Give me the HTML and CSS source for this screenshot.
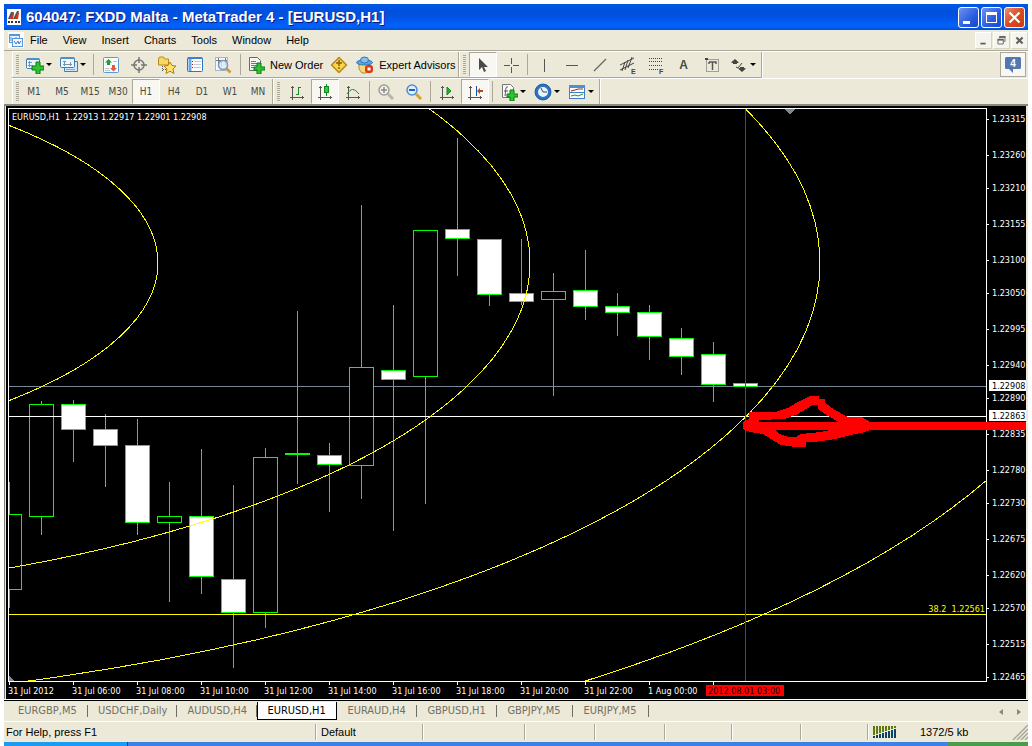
FILE: index.html
```html
<!DOCTYPE html>
<html lang="en">
<head>
<meta charset="utf-8">
<title>604047: FXDD Malta - MetaTrader 4 - [EURUSD,H1]</title>
<link rel="stylesheet" href="styles.css">
</head>
<body>
<div class="window">
  <header class="titlebar">
    <svg class="app-icon" viewBox="0 0 14 16"><rect width="14" height="16" fill="#fff"/><path d="M1 10L4 3l3 0-2 7zM6 10l4-8 2 0-3 8z" fill="#555"/><path d="M3 10l3-6 1 1-1 5zM8 10l3-7 1 1-1 6z" fill="#e03010"/><path d="M1 13h2M4 13h2M8 13h2M11 13h2" stroke="#333" stroke-width="2"/></svg>
    <h1 class="title">604047: FXDD Malta - MetaTrader 4 - [EURUSD,H1]</h1>
    <div class="win-buttons">
      <button class="win-btn" aria-label="Minimize"><svg viewBox="0 0 19 19"><path d="M4 13h7v3H4z" fill="#fff"/></svg></button>
      <button class="win-btn" aria-label="Maximize"><svg viewBox="0 0 19 19"><path d="M4 4h11v11H4zM5 7h9v7H5z" fill="#fff" fill-rule="evenodd"/></svg></button>
      <button class="win-btn close" aria-label="Close"><svg viewBox="0 0 19 19"><path d="M4.500 4.500l10 10M14.500 4.500l-10 10" stroke="#fff" stroke-width="2.200"/></svg></button>
    </div>
  </header>

  <nav class="menubar">
    <svg class="menu-icon" viewBox="0 0 16 16"><rect width="16" height="16" fill="#fff"/><rect x="1.500" y="2.500" width="10" height="8" fill="#e4f0fc" stroke="#5a96dc"/><path d="M1 3h11" stroke="#5a96dc" stroke-width="2"/><path d="M3 5v4M5 6v4M8 5v4" stroke="#5a96dc"/><rect x="4.500" y="6.500" width="10" height="8" fill="#f2f8ff" stroke="#5a96dc"/><path d="M6 9l2 3 2-3 1 3 2-3" fill="none" stroke="#3c78c8"/></svg>
    <button>File</button><button>View</button><button>Insert</button><button>Charts</button><button>Tools</button><button>Window</button><button>Help</button>
    <div class="mdi">
      <button aria-label="Minimize chart"><svg viewBox="0 0 17 17"><path d="M5 11h6v2H5z" fill="#63625a"/></svg></button>
      <button aria-label="Restore chart"><svg viewBox="0 0 17 17"><path d="M6.500 6V4.500h6v5H11M4.500 7.500h6v5h-6z" fill="none" stroke="#63625a"/><path d="M6 4.500h7M4 7.500h7" stroke="#63625a" stroke-width="2"/></svg></button>
      <button aria-label="Close chart"><svg viewBox="0 0 17 17"><path d="M5 5l7 7M12 5l-7 7" stroke="#63625a" stroke-width="2.400"/></svg></button>
    </div>
  </nav>

  <div class="toolbars">
    <div class="row">
      <div class="toolbar standard">
        <i class="grip"></i>
        <button class="tool drop" aria-label="New chart"><svg viewBox="0 0 18 18"><rect x=".500" y="2.500" width="13" height="10" rx="1" fill="#eef6fe" stroke="#3f7fb5"/><path d="M1 3h12" stroke="#4c90d0" stroke-width="2"/><path d="M3.500 5v6M2 9.500h5M2 6.500h4" stroke="#7592ad"/><path d="M10 6h4v4h4v4h-4v4h-4v-4H6v-4h4z" fill="#2fc42f" stroke="#087a18"/></svg><b class="arrow"></b></button>
        <button class="tool drop" aria-label="Profiles"><svg viewBox="0 0 18 18"><path d="M4.500 5.500h13v10h-13z" fill="#d3e7fb" stroke="#3f7fb5"/><rect x=".500" y="1.500" width="14" height="10" rx="1" fill="#eef6fe" stroke="#3f7fb5"/><path d="M1 2h13" stroke="#4c90d0" stroke-width="2"/><path d="M3 5.500h3M3 8.500h9M10.500 6v4M4.500 5v5" stroke="#7592ad"/><path d="M6 13.500h9" stroke="#9ab"/></svg><b class="arrow"></b></button>
        <i class="sep"></i>
        <button class="tool" aria-label="Market Watch"><svg viewBox="0 0 18 18"><rect x="1.500" y="1.500" width="15" height="15" rx="1" fill="#f8fcff" stroke="#5b9bd5"/><path d="M11 5.500h4M3 12.500h4M3 14.500h5" stroke="#b8c4d0"/><path d="M6.500 3l3.500 3.500H8V9H5V6.500H3z" fill="#18a030"/><path d="M11.500 15.500L8 12h2V9h3v3h2z" fill="#e05a40"/></svg></button>
        <button class="tool" aria-label="Data Window"><svg viewBox="0 0 18 18"><circle cx="9" cy="9" r="5" fill="none" stroke="#777" stroke-width="1.500"/><path d="M9 1v6M9 11v6M1 9h6M11 9h6" stroke="#777" stroke-width="1.500"/></svg></button>
        <button class="tool" aria-label="Navigator"><svg viewBox="0 0 18 18"><path d="M.500 3l1-2h4l1 2h4v6H.500z" fill="#f7d867" stroke="#b58a18"/><path d="M4.500 10v6M5 13.500h3" stroke="#555" stroke-dasharray="1 1"/><path d="M12 6l2 3.500 4 .5-3 3 1 4.500-4-2.300-4 2.300 1-4.500-3-3 4-.5z" fill="#ffe46a" stroke="#b57a20"/></svg></button>
        <button class="tool" aria-label="Terminal"><svg viewBox="0 0 18 18"><rect x="1.500" y="1.500" width="15" height="14" rx="1" fill="#fff" stroke="#2f73c2"/><path d="M2 2h14" stroke="#3b82d8" stroke-width="2"/><path d="M4 3v12" stroke="#6ba6e6" stroke-width="3"/><path d="M6 5.500h1M6 8.500h1M6 11.500h1" stroke="#b01010"/><path d="M8 5.500h7M8 8.500h7M8 11.500h7" stroke="#bccadb"/></svg></button>
        <button class="tool" aria-label="Strategy Tester"><svg viewBox="0 0 18 18"><rect x="1.500" y="1.500" width="12" height="13" fill="#f4f8fc" stroke="#a8b8c8"/><path d="M4.500 2v7M2 4.500h11M11.500 2v7M7.500 4v7" stroke="#778"/><circle cx="9" cy="9" r="4.500" fill="#d9ebfa" fill-opacity=".8" stroke="#7b98b8" stroke-width="1.500"/><path d="M12.500 12.500l4 4" stroke="#d09a30" stroke-width="2.500"/></svg></button>
        <i class="sep"></i>
        <button class="tool label"><svg viewBox="0 0 18 18"><path d="M2.500 1.500h8l3 3v10h-11z" fill="#f6f6f6" stroke="#686868"/><path d="M4 5.500h5M4 7.500h7M4 9.500h6M4 11.500h4" stroke="#777"/><path d="M10 7h4v4h4v3h-4v4h-4v-4H7v-3h3z" fill="#2fc42f" stroke="#087a18"/></svg><span>New Order</span></button>
        <button class="tool" aria-label="MetaEditor"><svg viewBox="0 0 18 18"><path d="M9 1.500L16.500 9 9 16.500 1.500 9z" fill="#f8d44a" stroke="#b58812" stroke-width="1.500" stroke-linejoin="round"/><path d="M9 4v6M6 7h6M9 11v2" stroke="#8a5c10" stroke-width="1.500"/></svg></button>
        <button class="tool label"><svg viewBox="0 0 18 18"><path d="M3 8h11v4l-4 5H6l-3-4z" fill="#f6d878" stroke="#b08a30"/><ellipse cx="8.500" cy="6.500" rx="8" ry="2.500" fill="#5ea3df" stroke="#3478b4"/><ellipse cx="8.500" cy="4" rx="4" ry="3" fill="#85bff0" stroke="#3478b4"/><rect x="9" y="9" width="8" height="8" rx="3" fill="#dc3818"/><rect x="11.500" y="11.500" width="3" height="3" fill="#fff"/></svg><span>Expert Advisors</span></button>
      </div>
      <div class="toolbar">
        <i class="grip"></i>
        <button class="tool pressed" aria-label="Cursor"><svg viewBox="0 0 18 18"><path d="M5 2v12l3-3 2 5 2-1-2-4h4z" fill="#4a4a4a"/></svg></button>
        <button class="tool" aria-label="Crosshair"><svg viewBox="0 0 18 18"><path d="M9.500 2v6M9.500 11v6M2 9.500h6M11 9.500h6" stroke="#555"/></svg></button>
        <i class="sep slim"></i>
        <button class="tool" aria-label="Vertical line"><svg viewBox="0 0 18 18"><path d="M9.500 3v13" stroke="#555"/></svg></button>
        <button class="tool" aria-label="Horizontal line"><svg viewBox="0 0 18 18"><path d="M3 9.500h12" stroke="#555"/></svg></button>
        <button class="tool" aria-label="Trendline"><svg viewBox="0 0 18 18"><path d="M3 15L15 3" stroke="#666" stroke-width="1.300"/></svg></button>
        <button class="tool" aria-label="Equidistant channel"><svg viewBox="0 0 18 18"><path d="M1 9l14-7M1 14l14-7M3 15l3-9M6 14l3-10M9 12l4-11" stroke="#444"/><text x="12" y="18" class="tiny">E</text></svg></button>
        <button class="tool" aria-label="Fibonacci retracement"><svg viewBox="0 0 18 18"><path d="M2 2.500h14M2 5.500h14M2 9.500h14M2 13.500h9" stroke="#444" stroke-dasharray="1 1"/><text x="12" y="18" class="tiny">F</text></svg></button>
        <button class="tool glyph" aria-label="Text">A</button>
        <button class="tool" aria-label="Text label"><svg viewBox="0 0 18 18"><path d="M3.500 3.500h12v12h-12z" fill="none" stroke="#555" stroke-dasharray="1 1"/><path d="M2 2h3v2H2z" fill="#444"/><path d="M6 6h7v2M6 8V6M9.500 6v8" stroke="#555" stroke-width="1.500" fill="none"/></svg></button>
        <button class="tool drop" aria-label="Arrows"><svg viewBox="0 0 18 18"><path d="M5 3l4 3.500-2 .5v1H3V7l-2-.500zM12 16l-4-3.500 2-.5v-1h4v1l2 .500z" fill="#444"/><path d="M6 11l2 1 4-5" stroke="#444" fill="none"/></svg><b class="arrow"></b></button>
      </div>
      <button class="messages" aria-label="4 messages"><svg viewBox="0 0 18 18"><path d="M2 1h14l1 1v10l-1 1h-7v4l-4-4H2l-1-1V2z" fill="#5577b0"/><text x="9" y="11">4</text></svg></button>
    </div>
    <div class="row lower">
      <div class="toolbar periods">
        <i class="grip"></i>
        <button class="tool">M1</button><button class="tool">M5</button><button class="tool">M15</button><button class="tool">M30</button><button class="tool pressed">H1</button><button class="tool">H4</button><button class="tool">D1</button><button class="tool">W1</button><button class="tool">MN</button>
      </div>
      <div class="toolbar">
        <i class="grip"></i>
        <button class="tool" aria-label="Bar chart"><svg viewBox="0 0 18 18"><path d="M4.500 3v14M2 14.500h14M3 4.500h3M14.500 13v3" stroke="#555"/><path d="M10.500 4v8M8 11.500h3M10 4.500h3" stroke="#1c8a30"/></svg></button>
        <button class="tool pressed" aria-label="Candlesticks"><svg viewBox="0 0 18 18"><path d="M4.500 3v14M2 14.500h14M3 4.500h3M14.500 13v3" stroke="#555"/><path d="M10.500 1v12" stroke="#118a20"/><rect x="8.500" y="3.500" width="4" height="6" fill="#28d040" stroke="#118a20"/></svg></button>
        <button class="tool" aria-label="Line chart"><svg viewBox="0 0 18 18"><path d="M4.500 3v14M2 14.500h14M3 4.500h3M14.500 13v3" stroke="#555"/><path d="M3 11c4-6 7-6 12 0" fill="none" stroke="#1c8a30"/></svg></button>
        <i class="sep slim"></i>
        <button class="tool" aria-label="Zoom in"><svg viewBox="0 0 18 18"><path d="M11 11l5 5" stroke="#b8b6a8" stroke-width="3"/><circle cx="7" cy="7" r="5" fill="#f4f3ee" stroke="#9f9f98" stroke-width="1.500"/><path d="M4 7h6M7 4v6" stroke="#888" stroke-width="1.500"/></svg></button>
        <button class="tool" aria-label="Zoom out"><svg viewBox="0 0 18 18"><path d="M11 11l5 5" stroke="#d6a52c" stroke-width="3"/><circle cx="7" cy="7" r="5" fill="#e2f0fd" stroke="#4c8fd8" stroke-width="1.500"/><path d="M4 7h6" stroke="#2660b0" stroke-width="2"/></svg></button>
        <i class="sep slim"></i>
        <button class="tool" aria-label="Auto scroll"><svg viewBox="0 0 18 18"><path d="M4.500 3v14M2 14.500h14M3 4.500h3M14.500 13v3" stroke="#555"/><path d="M9 4l4 4-4 4z" fill="#1fae35" stroke="#118a20"/></svg></button>
        <button class="tool pressed" aria-label="Chart shift"><svg viewBox="0 0 18 18"><path d="M4.500 3v14M2 14.500h14M3 4.500h3M14.500 13v3" stroke="#555"/><path d="M10.500 3v10" stroke="#1850a0"/><path d="M11 8l3-3v2h3v2h-3v2z" fill="#b84820"/></svg></button>
        <i class="sep"></i>
        <button class="tool drop" aria-label="Indicators"><svg viewBox="0 0 18 18"><path d="M2.500 1.500h8l3 3v10h-11z" fill="#fafafa" stroke="#777"/><path d="M8 4c-3-1-2 4-3 9M4 8h4" stroke="#555" fill="none"/><path d="M10 7h4v4h4v3h-4v4h-4v-4H7v-3h3z" fill="#2fc42f" stroke="#087a18"/></svg><b class="arrow"></b></button>
        <button class="tool drop" aria-label="Periods"><svg viewBox="0 0 18 18"><circle cx="9" cy="9" r="6.500" fill="#e8f4ff" stroke="#2a72c8" stroke-width="3"/><circle cx="9" cy="9" r="8" fill="none" stroke="#154c90" stroke-width=".8"/><path d="M7 5l2 4h4" fill="none" stroke="#444"/></svg><b class="arrow"></b></button>
        <button class="tool drop" aria-label="Templates"><svg viewBox="0 0 18 18"><rect x="1.500" y="2.500" width="15" height="13" fill="#fff" stroke="#3d7fc4"/><path d="M1 3.500h16" stroke="#4c90d8" stroke-width="3"/><path d="M2 9.500h14" stroke="#3d7fc4"/><path d="M3 8l4-1 3-1 5 0" stroke="#a02818" fill="none"/><path d="M3 13l4-1 3 1 5-2" stroke="#208a30" fill="none"/></svg><b class="arrow"></b></button>
      </div>
    </div>
  </div>

  <main class="chart-frame">
    <svg class="chart" viewBox="6 106 1020 593" role="img" aria-label="EURUSD H1 candlestick chart">
      <defs><clipPath id="plot"><rect x="9" y="109" width="977" height="572"/></clipPath></defs>
      <rect x="6" y="106" width="1020" height="593" fill="#000"/>
      <g class="crisp" clip-path="url(#plot)">
        <path d="M9 386.500H986" stroke="#778899"/>
        <path class="wick" d="M9.500 482V608M41.500 401V535M73.500 400V462M105.500 414V487M137.500 419V535M169.500 482V602M201.500 449V594M233.500 485V668M265.500 448V628M297.500 311V484M329.500 443V512M361.500 205V499M393.500 305V531M425.500 376V504M457.500 138V276M489.500 239V306M521.500 239V305M553.500 273V396M585.500 250V320M617.500 293V336M649.500 305V360M681.500 328V375M713.500 342V402"/>
        <g class="bull">
          <rect x="-2.500" y="514.500" width="24" height="75"/><rect x="29.500" y="404.500" width="24" height="112"/><rect x="157.500" y="516.500" width="24" height="6"/><rect x="253.500" y="457.500" width="24" height="155"/><rect x="349.500" y="367.500" width="24" height="98"/><rect x="413.500" y="230.500" width="24" height="146"/><rect x="541.500" y="291.500" width="24" height="8"/>
        </g>
        <path d="M9.500 482v32M9.500 590v18" class="wick"/><rect x="285" y="453" width="25" height="2" fill="#0f0"/>
        <g class="bear">
          <rect x="61.500" y="404.500" width="24" height="25"/><rect x="93.500" y="429.500" width="24" height="16"/><rect x="125.500" y="445.500" width="24" height="77"/><rect x="189.500" y="516.500" width="24" height="60"/><rect x="221.500" y="579.500" width="24" height="33"/><rect x="317.500" y="455.500" width="24" height="9"/><rect x="381.500" y="370.500" width="24" height="9"/><rect x="445.500" y="229.500" width="24" height="9"/><rect x="477.500" y="239.500" width="24" height="55"/><rect x="509.500" y="293.500" width="24" height="8"/><rect x="573.500" y="290.500" width="24" height="16"/><rect x="605.500" y="306.500" width="24" height="6"/><rect x="637.500" y="312.500" width="24" height="24"/><rect x="669.500" y="338.500" width="24" height="18"/><rect x="701.500" y="354.500" width="24" height="30"/><rect x="733.500" y="383.500" width="24" height="3"/>
        </g>
        <path d="M9 416.500H986" stroke="#fff"/>
        <g class="arc">
          <path d="M9 614.500H986"/>
          <ellipse cx="-385" cy="263" rx="543" ry="200"/><ellipse cx="-385" cy="263" rx="915" ry="338"/><ellipse cx="-385" cy="263" rx="1205" ry="445"/><ellipse cx="-385" cy="263" rx="1493" ry="550"/>
        </g>
        <path d="M745.500 109V681" stroke="#f00"/>
        <path d="M784 109h11l-5 5h-1zM9 676l5 5H9z" fill="#778899"/>
      </g>
      <path class="crisp axis" d="M8 108.500H986.500V681.500H8.500V108"/>
      <path class="crisp axis" d="M9.500 682v3M73.500 682v3M137.500 682v3M201.500 682v3M265.500 682v3M329.500 682v3M393.500 682v3M457.500 682v3M521.500 682v3M585.500 682v3M649.500 682v3M713.500 682v3M987 119.500h2M987 155.500h2M987 188.500h2M987 224.500h2M987 260.500h2M987 293.500h2M987 329.500h2M987 365.500h2M987 398.500h2M987 434.500h2M987 470.500h2M987 503.500h2M987 539.500h2M987 575.500h2M987 608.500h2M987 644.500h2M987 677.500h2"/>
      <text x="12" y="120">EURUSD,H1&#160; 1.22913 1.22917 1.22901 1.22908</text>
      <g>
        <text x="992" y="122">1.23315</text><text x="992" y="158">1.23260</text><text x="992" y="191">1.23210</text><text x="992" y="227">1.23155</text><text x="992" y="263">1.23100</text><text x="992" y="296">1.23050</text><text x="992" y="332">1.22995</text><text x="992" y="368">1.22940</text><text x="992" y="401">1.22890</text><text x="992" y="437">1.22835</text><text x="992" y="473">1.22780</text><text x="992" y="506">1.22730</text><text x="992" y="542">1.22675</text><text x="992" y="578">1.22620</text><text x="992" y="611">1.22570</text><text x="992" y="647">1.22515</text><text x="992" y="680">1.22465</text>
      </g>
      <path d="M989 380h37v11h-37zM989 410h37v11h-37z" fill="#fff"/>
      <text class="dark" x="992" y="389">1.22908</text><text class="dark" x="992" y="419">1.22863</text>
      <text class="fib" x="985" y="612">38.2&#160; 1.22561</text>
      <g>
        <text x="8" y="694">31 Jul 2012</text><text x="72" y="694">31 Jul 06:00</text><text x="136" y="694">31 Jul 08:00</text><text x="200" y="694">31 Jul 10:00</text><text x="264" y="694">31 Jul 12:00</text><text x="328" y="694">31 Jul 14:00</text><text x="392" y="694">31 Jul 16:00</text><text x="456" y="694">31 Jul 18:00</text><text x="520" y="694">31 Jul 20:00</text><text x="584" y="694">31 Jul 22:00</text><text x="648" y="694">1 Aug 00:00</text>
      </g>
      <rect x="706" y="685" width="78" height="11" fill="#f00"/><text class="dark" x="708" y="694">2012.08.01 03:00</text>
      <path class="marker crisp" d="M743 422L749 419V412H775L788 408L798 402L806 398L810 396H819V399H825V403L835 410L848 417H862L870 422H1026V430H870L865 432L851 435L835 439L815 442H806V447H795L781 445L771 439L763 434L750 432L743 429ZM759 420V422H839L828 416L818 409V405H813L798 414L785 419ZM775 430L780 434L788 437H796L801 434L821 432L830 430Z"/>
    </svg>
  </main>

  <nav class="tabs">
    <button>EURGBP,M5</button><button>USDCHF,Daily</button><button>AUDUSD,H4</button><button class="active">EURUSD,H1</button><button>EURAUD,H4</button><button>GBPUSD,H1</button><button class="short">GBPJPY,M5</button><button class="short">EURJPY,M5</button>
    <div class="scroll"><button aria-label="Scroll left"><svg viewBox="0 0 6 8"><path d="M5 1v6L1 4z"/></svg></button><button aria-label="Scroll right"><svg viewBox="0 0 6 8"><path d="M1 1v6l4-3z"/></svg></button></div>
  </nav>

  <footer class="status">
    <span>For Help, press F1</span><span>Default</span><span></span><span></span><span></span><span></span><span></span><span></span>
    <span class="traffic">
      <svg class="bars" viewBox="0 0 24 12"><path d="M1 0v9M4 0v8M7 0v7M10 0v6M13 0v5M16 0v4M19 0v3M22 0v2" stroke="#5c7a10" stroke-width="2"/><path d="M1 10v2M4 9v3M7 8v4M10 7v5M13 6v6M16 5v7M19 4v8M22 3v9" stroke="#0c4468" stroke-width="2"/></svg>
      <span>1372/5 kb</span>
      <svg class="size-grip" viewBox="0 0 16 16"><path d="M1 16L16 1M5 16L16 5M9 16l7-7M13 16l3-3" stroke="#aca899" stroke-width="1.500"/></svg>
    </span>
  </footer>
  <div class="taskbar"><i class="task-active"></i><i class="task-rest"></i><i class="tray"></i></div>
</div>
</body>
</html>
```
FILE: styles.css
```css
* { box-sizing: border-box; }
body {
  margin: 0;
  padding: 4px 4px 0;
  background: #fff;
  color: #000;
  font-family: "Liberation Sans", sans-serif;
  font-size: 11px;
  line-height: 16px;
}
button { margin: 0; padding: 0; border: 0; background: none; font: inherit; color: inherit; }
svg { display: block; }
.window { background: #ece9d8; }

.titlebar {
  display: flex;
  align-items: center;
  height: 26px;
  padding: 0 3px;
  background: linear-gradient(#0058e6, #0050dc 30%, #0054e3 50%, #0062fc 85%, #0050d0);
}
.app-icon { width: 14px; height: 16px; }
.title {
  flex: 1;
  margin: 0 0 0 5px;
  color: #fff;
  font-size: 15px;
  font-weight: bold;
  text-shadow: 1px 1px 0 #0a1883;
}
.win-buttons { display: flex; gap: 2px; }
.win-btn {
  width: 21px;
  height: 21px;
  border: 1px solid #fff;
  border-radius: 3px;
  background: linear-gradient(135deg, #6d94ec, #2a5ce0 60%, #1a48c0);
}
.win-btn.close { background: linear-gradient(135deg, #e89070, #dc4a20 50%, #c83c10); }

.menubar {
  display: flex;
  align-items: center;
  gap: 15px;
  height: 21px;
  padding-left: 4px;
  border-bottom: 1px solid #aca899;
}
.menu-icon { width: 16px; height: 16px; margin-right: -9px; }
.mdi { display: flex; gap: 1px; margin-left: auto; }
.mdi button { width: 17px; height: 17px; background: #f5f4ee; border: 1px solid #fff; border-right-color: #d8d4c4; border-bottom-color: #d8d4c4; }

.toolbars { border-bottom: 2px solid #8a887a; padding-left: 8px; }
.row { display: flex; border-top: 1px solid #fff; height: 27px; }
.row.lower { height: 26px; }
.toolbar {
  display: flex;
  align-items: center;
  border: 1px solid #aca899;
  border-width: 0 1px 1px 0;
  box-shadow: inset 1px 0 #fff, 1px 0 #fff;
  padding: 0 1px 0 4px;
}
.lower .toolbar { border-bottom: 0; }
.standard { padding-right: 0; }
.grip {
  width: 3px;
  height: 20px;
  margin-right: 3px;
  background: repeating-linear-gradient(#aca899 0 1px, #ece9d8 1px 2px);
}
.sep { width: 1px; height: 21px; margin: 0 3px; background: #aca899; }
.sep.slim { margin: 0 2px; }
.tool {
  display: flex;
  align-items: center;
  justify-content: center;
  width: 28px;
  height: 25px;
  color: #4a4a44;
}
.tool svg { width: 18px; height: 18px; }
.tool.drop { width: 34px; justify-content: flex-start; padding-left: 4px; }
.arrow { border: 3px solid transparent; border-top-color: #000; border-bottom: 0; margin-left: 2px; }
.tool.label { width: auto; padding: 0 2px 0 3px; gap: 5px; color: #000; }
.tool.pressed { background: #f8f7f1; border: 1px solid #fff; border-top-color: #aca899; border-left-color: #aca899; }
.tool.glyph { font-size: 12px; font-weight: bold; }
.tiny { font: bold 7px "Liberation Sans", sans-serif; fill: #444; }
.periods { padding-right: 0; font-family: "DejaVu Sans Condensed", "DejaVu Sans", sans-serif; font-size: 10px; }
.periods .grip { margin-right: 1px; }
.messages { display: flex; align-items: center; justify-content: center; width: 26px; height: 25px; margin-left: auto; margin-right: 2px; border: 1px solid #aca899; background: #f8f7f3; }
.messages svg { width: 18px; height: 18px; }
.messages text { fill: #fff; font: bold 10px "Liberation Sans", sans-serif; text-anchor: middle; }

.chart-frame { padding: 0 2px 0 1px; border-left: 1px solid #808075; }
.chart { width: 100%; height: auto; font-family: "DejaVu Sans Condensed", "DejaVu Sans", sans-serif; font-size: 9px; }
.chart text { fill: #fff; }
.chart text.dark { fill: #000; }
.chart text.fib { fill: #ff0; text-anchor: end; }
.crisp { shape-rendering: crispEdges; }
.axis { fill: none; stroke: #fff; }
.wick { stroke: #0f0; }
.bull rect { fill: #000; stroke: #0f0; }
.bear rect { fill: #fff; stroke: #0f0; }
.arc { fill: none; stroke: #ff0; }
.marker { fill: #f00; fill-rule: evenodd; }

.tabs {
  display: flex;
  height: 22px;
  padding: 2px 0 0 4px;
  border-top: 1px solid #fff;
  box-shadow: inset 0 1px #000;
  color: #716f64;
  font-family: "DejaVu Sans Condensed", "DejaVu Sans", sans-serif;
  font-size: 11px;
}
.tabs > button { min-width: 80px; height: 17px; padding: 0 10px; text-align: left; background: linear-gradient(#716f64, #716f64) right 3px / 1px 12px no-repeat; }
.tabs > button.short { min-width: 76px; }
.tabs > button.active { height: 18px; padding-left: 9px; border: solid #000; border-width: 0 1px 1px; background: #fff; color: #000; }
.scroll { display: flex; align-items: center; gap: 12px; margin-left: auto; padding-right: 6px; }
.scroll svg { width: 6px; height: 8px; fill: #8a887c; }

.status {
  display: grid;
  grid-template-columns: 1fr 107px 102px 70px 70px 67px 69px 67px 161px;
  align-items: center;
  height: 21px;
  border-top: 1px solid #fff;
}
.status > span { height: 16px; padding-left: 5px; border-left: 1px solid #aca899; box-shadow: inset 1px 0 #fff; }
.status > span:first-child { padding-left: 2px; border: 0; box-shadow: none; }
.traffic { display: flex; align-items: center; gap: 23px; }
.bars { width: 24px; height: 12px; }
.size-grip { width: 16px; height: 16px; margin-left: auto; }

.taskbar { display: flex; height: 4px; }
.task-active { width: 124px; background: #1c9cf0; border-right: 1px solid #123c90; }
.task-rest { flex: 1; background: #3c81e8; }
.tray { width: 80px; background: #4c9a4c; }
```
